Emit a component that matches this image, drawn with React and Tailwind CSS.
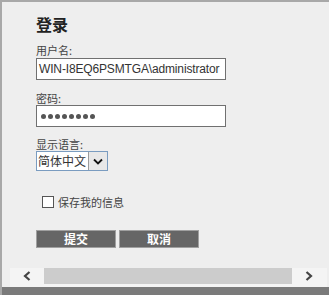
import React from "react";

const cjk = { fontFamily: '"Noto Sans CJK SC", "Noto Sans", sans-serif' };
const latin = { fontFamily: '"Liberation Sans", "Noto Sans CJK SC", sans-serif' };

export default function App() {
  return (
    <div className="w-[329px] h-[295px] bg-[#eeeeee] border-t-2 border-l-2 border-[#a8a8a8] flex flex-col overflow-hidden text-[#333333]" style={cjk}>
      <div className="flex-1 pl-[34px]">
        {/* title */}
        <h1 className="mt-[12px] h-[20px] leading-[20px] text-[16px] font-bold text-[#222222]">登录</h1>

        <label className="block mt-[9px] h-[14px] leading-[14px] text-[11px] text-[#444444]">用户名:</label>
        <div className="mt-[1px] w-[190px] h-[22px] border border-[#707070] bg-white flex items-center px-[2px] text-[12px] tracking-[-0.15px] text-[#333333] whitespace-nowrap overflow-hidden" style={latin}>
          WIN-I8EQ6PSMTGA\administrator
        </div>

        <label className="block mt-[11px] h-[14px] leading-[14px] text-[11px] text-[#444444]">密码:</label>
        <div className="w-[190px] h-[22px] border border-[#707070] bg-white flex items-center gap-[2px] px-[4px]">
          {Array.from({ length: 8 }).map((_, i) => (
            <span key={i} className="w-[5px] h-[5px] rounded-full bg-[#555555]" />
          ))}
        </div>

        <label className="block mt-[10px] h-[14px] leading-[14px] text-[11px] text-[#444444]">显示语言:</label>
        <div className="w-[72px] h-[20px] border border-[#7a9cc0] bg-white flex">
          <div className="flex-1 flex items-center pl-[1px] text-[12px] leading-none text-[#333333] whitespace-nowrap overflow-hidden">简体中文</div>
          <div className="w-[19px] shrink-0 bg-[#e8e8e8] border-l border-[#9a9a9a] flex items-center justify-center">
            <svg width="10" height="7" viewBox="0 0 10 7">
              <path d="M1 1.5 L5 5.5 L9 1.5" fill="none" stroke="#111" strokeWidth="1.8" />
            </svg>
          </div>
        </div>

        <div className="mt-[25px] flex items-center ml-[6px] h-[12px]">
          <span className="w-[12px] h-[12px] border border-[#555555] bg-white" />
          <span className="ml-[4px] text-[11px] leading-none text-[#444444]">保存我的信息</span>
        </div>

        <div className="mt-[22px] flex gap-[3px]">
          <button className="w-[80px] h-[18px] bg-[#666666] border border-[#a0a0a0] text-white text-[12px] font-bold leading-none">提交</button>
          <button className="w-[80px] h-[18px] bg-[#666666] border border-[#a0a0a0] text-white text-[12px] font-bold leading-none">取消</button>
        </div>
      </div>

      {/* scrollbar */}
      <div className="ml-[8px] mr-[2px] h-[19px] bg-[#f4f4f4] flex items-start">
        <div className="w-[34px] h-[16px] flex items-center justify-center">
          <svg width="8" height="10" viewBox="0 0 8 10">
            <path d="M6.5 1 L2 5 L6.5 9" fill="none" stroke="#444" strokeWidth="2.2" />
          </svg>
        </div>
        <div className="w-[248px] h-[16px] bg-[#cccccc]" />
        <div className="w-[33px] h-[16px] flex items-center justify-center">
          <svg width="8" height="10" viewBox="0 0 8 10">
            <path d="M1.5 1 L6 5 L1.5 9" fill="none" stroke="#444" strokeWidth="2.2" />
          </svg>
        </div>
      </div>
      <div className="h-[8px] bg-[#7a7a7a] -ml-[2px]" />
    </div>
  );
}
